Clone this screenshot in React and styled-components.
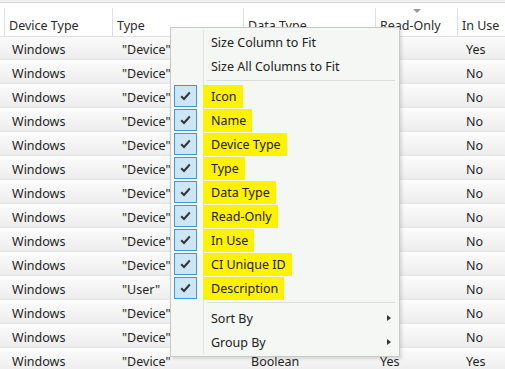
import styled, { createGlobalStyle } from "styled-components";

const GlobalStyle = createGlobalStyle`
  html, body {
    margin: 0;
    padding: 0;
    background: #ffffff;
    overflow: hidden;
  }
  body {
    font-family: "Noto Sans", "Open Sans", sans-serif;
    font-size: 12.5px;
  }
`;

const columns = [
  { key: "icon", title: "", width: 3 },
  { key: "device", title: "Device Type", width: 108 },
  { key: "type", title: "Type", width: 131 },
  { key: "data", title: "Data Type", width: 132 },
  { key: "ro", title: "Read-Only", width: 82, sorted: true },
  { key: "use", title: "In Use", width: 60 },
];

const rows = [
  ["Windows", '"Device"', "Boolean", "Yes", "Yes"],
  ["Windows", '"Device"', "Boolean", "Yes", "No"],
  ["Windows", '"Device"', "Boolean", "Yes", "No"],
  ["Windows", '"Device"', "Boolean", "Yes", "No"],
  ["Windows", '"Device"', "Boolean", "Yes", "No"],
  ["Windows", '"Device"', "Boolean", "Yes", "No"],
  ["Windows", '"Device"', "Boolean", "Yes", "No"],
  ["Windows", '"Device"', "Boolean", "Yes", "No"],
  ["Windows", '"Device"', "Boolean", "Yes", "No"],
  ["Windows", '"Device"', "Boolean", "Yes", "No"],
  ["Windows", '"User"', "Boolean", "Yes", "No"],
  ["Windows", '"Device"', "Boolean", "Yes", "No"],
  ["Windows", '"Device"', "Boolean", "Yes", "No"],
  ["Windows", '"Device"', "Boolean", "Yes", "Yes"],
];

const cellPads = [0, 9, 11, 9, 6, 10];

const checkedItems = [
  "Icon",
  "Name",
  "Device Type",
  "Type",
  "Data Type",
  "Read-Only",
  "In Use",
  "CI Unique ID",
  "Description",
];

const Page = styled.div`
  position: relative;
  width: 505px;
  height: 369px;
  overflow: hidden;
  background: #fff;
`;

const TopStrip = styled.div`
  height: 2px;
  background: #f0f0f0;
  border-bottom: 1px solid #d4d4d4;
  margin-bottom: 5px;
`;

const HeaderRow = styled.div`
  display: flex;
  height: 28px;
  border-bottom: 1px solid #e2e2e2;
  background: #fff;
`;

const HeaderCell = styled.div`
  position: relative;
  flex: 0 0 ${({ $w }) => $w}px;
  box-sizing: border-box;
  border-right: 1px solid #e0e0e0;
  padding: 9px 0 0 4px;
  color: #2b2b2b;
  white-space: nowrap;
  overflow: hidden;
`;

const SortArrow = styled.span`
  position: absolute;
  top: 1px;
  left: 37px;
  width: 0;
  height: 0;
  border-left: 4px solid transparent;
  border-right: 4px solid transparent;
  border-top: 4px solid #999;
`;

const Body = styled.div`
  display: flex;
  flex-direction: column;
`;

const Row = styled.div`
  display: flex;
  flex-shrink: 0;
  height: 23px;
  margin-bottom: 1px;
  background: linear-gradient(#fbfbfb, #ededed);
  border-bottom: 1px solid #e4e4e4;
  box-sizing: border-box;
`;

const Cell = styled.div`
  flex: 0 0 ${({ $w }) => $w}px;
  box-sizing: border-box;
  padding: 4px 0 0 ${({ $pad }) => $pad}px;
  color: #1f1f1f;
  white-space: nowrap;
  overflow: hidden;
`;

const Menu = styled.div`
  position: absolute;
  left: 170px;
  top: 27px;
  width: 230px;
  box-sizing: border-box;
  background: #f5f7f4;
  border: 1px solid #c8c8c8;
  box-shadow: 2px 2px 3px rgba(0, 0, 0, 0.12);
  display: flex;
  flex-direction: column;
  padding: 2px 0;
`;

const Gutter = styled.div`
  position: absolute;
  left: 32px;
  top: 2px;
  bottom: 2px;
  width: 1px;
  background: #e2e4e1;
`;

const Item = styled.div`
  position: relative;
  flex-shrink: 0;
  display: flex;
  align-items: center;
  height: 24px;
  padding-left: 40px;
  color: #202020;
  white-space: nowrap;
`;

const Label = styled.span`
  background: ${({ $hl }) => ($hl ? "#fff200" : "transparent")};
  margin-left: ${({ $hl }) => ($hl ? -8 : 0)}px;
  padding: ${({ $hl }) => ($hl ? "3px 6px 3px 8px" : "0")};
`;

const Check = styled.span`
  position: absolute;
  left: 3px;
  top: 1px;
  width: 21px;
  height: 20px;
  background: #cde6f6;
  border: 1px solid #3d9ad9;
  display: flex;
  align-items: center;
  justify-content: center;
`;

const Separator = styled.div`
  flex-shrink: 0;
  height: 1px;
  margin: 2px 4px 3px 36px;
  background: #dcdcdc;
`;

const SubArrow = styled.span`
  position: absolute;
  right: 8px;
  top: 9px;
  width: 0;
  height: 0;
  border-top: 3.5px solid transparent;
  border-bottom: 3.5px solid transparent;
  border-left: 4px solid #333;
`;

function CheckMark() {
  return (
    <svg width="11" height="10" viewBox="0 0 11 10">
      <path d="M1.2 5.2 L4 8 L9.8 1.5" fill="none" stroke="#333" strokeWidth="2" />
    </svg>
  );
}

export default function App() {
  return (
    <Page>
      <GlobalStyle />
      <TopStrip />
      <HeaderRow>
        {columns.map((c) => (
          <HeaderCell key={c.key} $w={c.width}>
            {c.sorted && <SortArrow />}
            {c.title}
          </HeaderCell>
        ))}
      </HeaderRow>
      <Body>
        {rows.map((r, i) => (
          <Row key={i}>
            <Cell $w={columns[0].width} $pad={0} />
            {r.map((v, j) => (
              <Cell key={j} $w={columns[j + 1].width} $pad={cellPads[j + 1]}>
                {v}
              </Cell>
            ))}
          </Row>
        ))}
      </Body>
      <Menu>
        <Gutter />
        <Item><Label>Size Column to Fit</Label></Item>
        <Item><Label>Size All Columns to Fit</Label></Item>
        <Separator />
        {checkedItems.map((t) => (
          <Item key={t}>
            <Check><CheckMark /></Check>
            <Label $hl>{t}</Label>
          </Item>
        ))}
        <Separator />
        <Item><Label>Sort By</Label><SubArrow /></Item>
        <Item><Label>Group By</Label><SubArrow /></Item>
      </Menu>
    </Page>
  );
}
